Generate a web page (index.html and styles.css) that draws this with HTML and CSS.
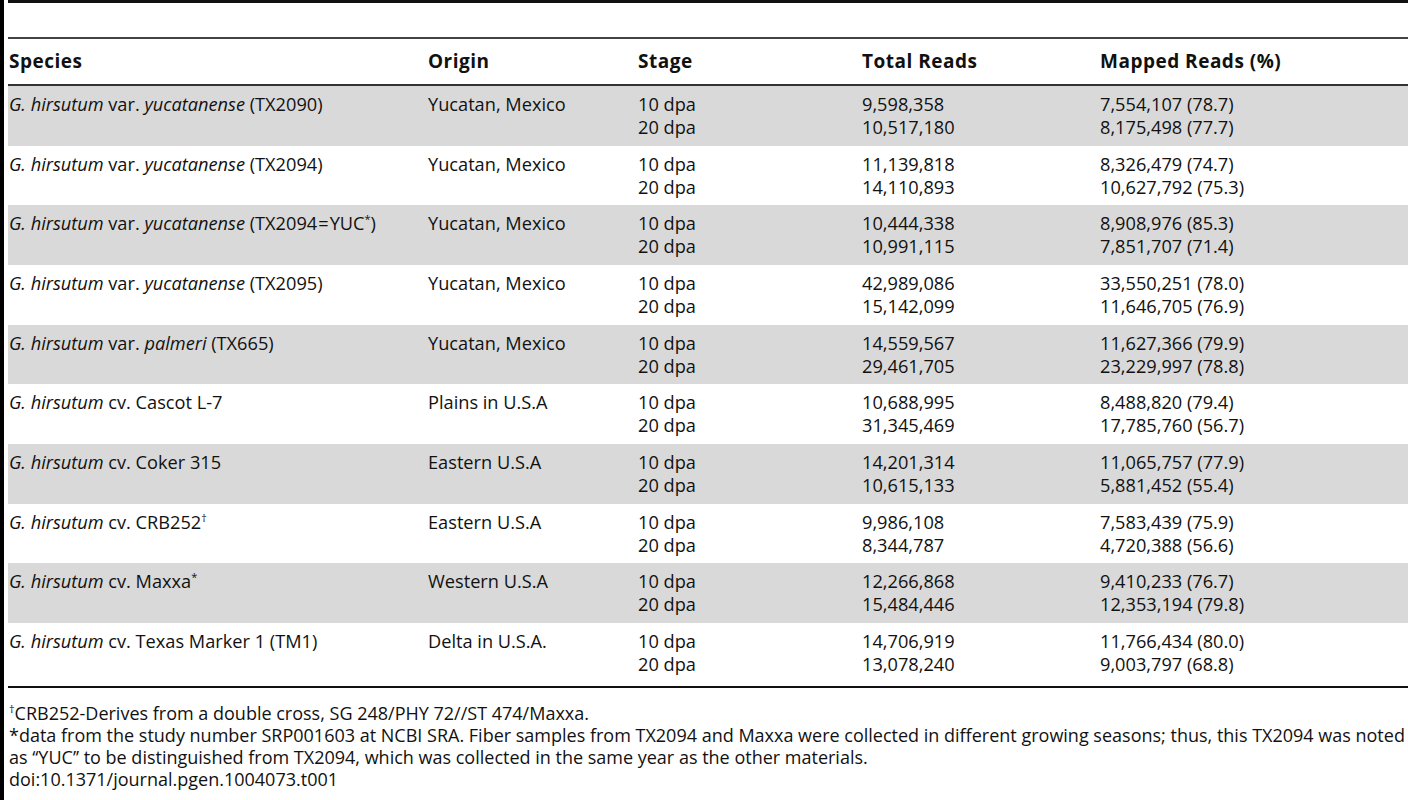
FILE: index.html
```html
<!DOCTYPE html>
<html lang="en">
<head>
<meta charset="utf-8">
<title>Table 1</title>
<link rel="stylesheet" href="styles.css">
</head>
<body>
<div class="page">
  <div class="caption-area"></div>
  <table class="data">
    <thead>
      <tr>
        <th class="c-species">Species</th>
        <th class="c-origin">Origin</th>
        <th class="c-stage">Stage</th>
        <th class="c-total">Total Reads</th>
        <th class="c-mapped">Mapped Reads (%)</th>
      </tr>
    </thead>
    <tbody>
      <tr class="shade">
        <td><i>G. hirsutum</i> var. <i>yucatanense</i> (TX2090)</td>
        <td>Yucatan, Mexico</td>
        <td>10 dpa<br>20 dpa</td>
        <td>9,598,358<br>10,517,180</td>
        <td>7,554,107 (78.7)<br>8,175,498 (77.7)</td>
      </tr>
      <tr>
        <td><i>G. hirsutum</i> var. <i>yucatanense</i> (TX2094)</td>
        <td>Yucatan, Mexico</td>
        <td>10 dpa<br>20 dpa</td>
        <td>11,139,818<br>14,110,893</td>
        <td>8,326,479 (74.7)<br>10,627,792 (75.3)</td>
      </tr>
      <tr class="shade">
        <td><i>G. hirsutum</i> var. <i>yucatanense</i> (TX2094<span class="eq">=</span>YUC<sup>*</sup>)</td>
        <td>Yucatan, Mexico</td>
        <td>10 dpa<br>20 dpa</td>
        <td>10,444,338<br>10,991,115</td>
        <td>8,908,976 (85.3)<br>7,851,707 (71.4)</td>
      </tr>
      <tr>
        <td><i>G. hirsutum</i> var. <i>yucatanense</i> (TX2095)</td>
        <td>Yucatan, Mexico</td>
        <td>10 dpa<br>20 dpa</td>
        <td>42,989,086<br>15,142,099</td>
        <td>33,550,251 (78.0)<br>11,646,705 (76.9)</td>
      </tr>
      <tr class="shade">
        <td><i>G. hirsutum</i> var. <i>palmeri</i> (TX665)</td>
        <td>Yucatan, Mexico</td>
        <td>10 dpa<br>20 dpa</td>
        <td>14,559,567<br>29,461,705</td>
        <td>11,627,366 (79.9)<br>23,229,997 (78.8)</td>
      </tr>
      <tr>
        <td><i>G. hirsutum</i> cv. Cascot L-7</td>
        <td>Plains in U.S.A</td>
        <td>10 dpa<br>20 dpa</td>
        <td>10,688,995<br>31,345,469</td>
        <td>8,488,820 (79.4)<br>17,785,760 (56.7)</td>
      </tr>
      <tr class="shade">
        <td><i>G. hirsutum</i> cv. Coker 315</td>
        <td>Eastern U.S.A</td>
        <td>10 dpa<br>20 dpa</td>
        <td>14,201,314<br>10,615,133</td>
        <td>11,065,757 (77.9)<br>5,881,452 (55.4)</td>
      </tr>
      <tr>
        <td><i>G. hirsutum</i> cv. CRB252<sup>†</sup></td>
        <td>Eastern U.S.A</td>
        <td>10 dpa<br>20 dpa</td>
        <td>9,986,108<br>8,344,787</td>
        <td>7,583,439 (75.9)<br>4,720,388 (56.6)</td>
      </tr>
      <tr class="shade">
        <td><i>G. hirsutum</i> cv. Maxxa<sup>*</sup></td>
        <td>Western U.S.A</td>
        <td>10 dpa<br>20 dpa</td>
        <td>12,266,868<br>15,484,446</td>
        <td>9,410,233 (76.7)<br>12,353,194 (79.8)</td>
      </tr>
      <tr class="last">
        <td><i>G. hirsutum</i> cv. Texas Marker 1 (TM1)</td>
        <td>Delta in U.S.A.</td>
        <td>10 dpa<br>20 dpa</td>
        <td>14,706,919<br>13,078,240</td>
        <td>11,766,434 (80.0)<br>9,003,797 (68.8)</td>
      </tr>
    </tbody>
  </table>
  <div class="notes">
    <p><sup>†</sup>CRB252-Derives from a double cross, SG 248/PHY 72//ST 474/Maxxa.</p>
    <p>*data from the study number SRP001603 at NCBI SRA. Fiber samples from TX2094 and Maxxa were collected in different growing seasons; thus, this TX2094 was noted as ‘‘YUC’’ to be distinguished from TX2094, which was collected in the same year as the other materials.</p>
    <p>doi:10.1371/journal.pgen.1004073.t001</p>
  </div>
</div>
</body>
</html>
```

FILE: styles.css
```css
html, body {
  margin: 0;
  padding: 0;
  background: #fff;
}
body {
  font-family: "Open Sans", "Noto Sans", sans-serif;
  color: #111;
  font-size: 18.2px;
}
.page {
  border-left: 4px solid #000;
  padding-left: 4px;
  min-height: 800px;
  box-sizing: border-box;
}
.caption-area {
  height: 34px;
  border-top: 3px solid #111;
  border-bottom: 2px solid #444;
}
.data {
  width: 100%;
  border-collapse: collapse;
  table-layout: fixed;
}
.data th, .data td {
  text-align: left;
  vertical-align: top;
  padding: 7px 0 6.67px 1px;
  line-height: 23px;
  white-space: nowrap;
}
.data th {
  font-weight: 700;
  font-size: 19px;
  letter-spacing: 0.5px;
  padding: 11px 0 11px 1px;
  border-bottom: 2px solid #333;
}
.c-species { width: 418px; }
.c-origin { width: 209px; }
.c-stage { width: 223px; }
.c-total { width: 237px; }
.shade td { background: #d9d9d9; }
.data tr.last td {
  padding-bottom: 10px;
  border-bottom: 2px solid #111;
}
sup {
  font-size: 11px;
  line-height: 0;
  vertical-align: 7px;
}
.eq { padding: 0 1px; }
.notes {
  padding: 14px 0 0 1px;
  font-size: 18px;
  line-height: 22px;
}
.notes p { margin: 0; }
```
